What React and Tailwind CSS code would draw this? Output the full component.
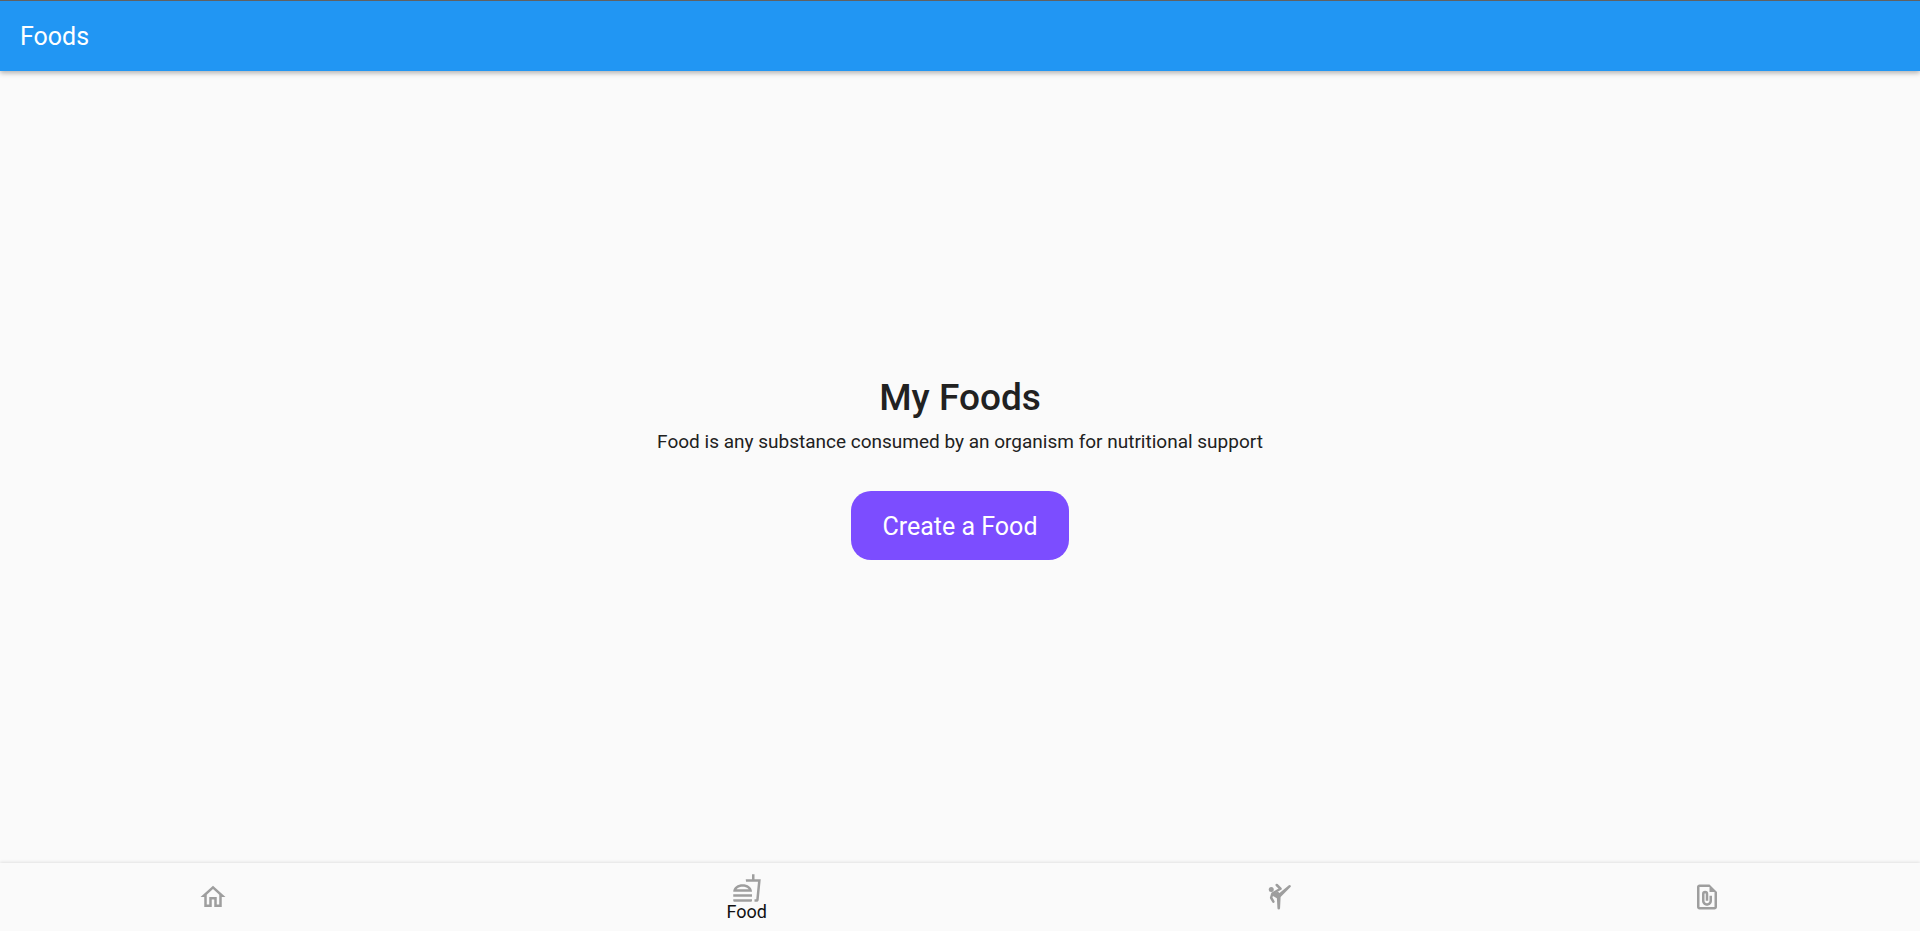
import { MdOutlineHome, MdOutlineFastfood, MdOutlineFilePresent } from "react-icons/md";

function KickIcon({ size }) {
  return (
    <svg width={size} height={size} viewBox="0 0 24 24" fill="none" aria-hidden="true">
      <circle cx="5" cy="6" r="2" fill="currentColor" />
      <path d="M9.4 2.4 12.4 5.4 5.9 9.2 4.9 12.6 6.7 15.7" stroke="currentColor" strokeWidth="2" strokeLinecap="round" strokeLinejoin="round" />
      <path d="M10.4 7.7 11.6 8.7 19.1 2.6Q19.8 2 20.5 2.8 21.1 3.4 20.4 4L12.5 12 12.05 21.05Q12 22 11 22 10 22 9.95 21.05L9.5 13 6 11 6 9Z" fill="currentColor" />
    </svg>
  );
}

const tabs = [
  { label: "Home", Icon: MdOutlineHome },
  { label: "Food", Icon: MdOutlineFastfood, active: true },
  { label: "Exercise", Icon: KickIcon },
  { label: "Records", Icon: MdOutlineFilePresent },
];

export default function App() {
  return (
    <div className="flex min-h-screen flex-col bg-[#fafafa] font-['Roboto',sans-serif] text-[#212121]">
      <header className="z-10 flex h-[71px] items-center border-t border-[#616161] bg-[#2196f3] px-5 pt-0.5 shadow-[0_2px_5px_rgba(0,0,0,0.3)]">
        <h1 className="text-[25px] leading-8 text-white">Foods</h1>
      </header>
      <main className="flex grow flex-col items-center justify-center pt-px">
        <h2 className="text-[37px] leading-11 font-medium">My Foods</h2>
        <p className="mt-2 text-[19px] leading-7">Food is any substance consumed by an organism for nutritional support</p>
        <button type="button" className="mt-[35px] h-[69px] rounded-[20px] bg-[#7c4dff] px-8 pt-1 text-[25px] text-white">
          Create a Food
        </button>
      </main>
      <nav className="grid h-[68px] grid-cols-[2fr_3fr_2fr_2fr] shadow-[0_-1px_3px_rgba(0,0,0,0.1)]">
        {tabs.map(({ label, Icon, active }) => (
          <button key={label} type="button" aria-label={label} aria-current={active ? "page" : undefined} className="flex flex-col items-center justify-center text-[#9e9e9e]">
            <Icon size={30} />
            {active && <span className="text-[18px] leading-[18px] text-[#111111]">{label}</span>}
          </button>
        ))}
      </nav>
    </div>
  );
}
